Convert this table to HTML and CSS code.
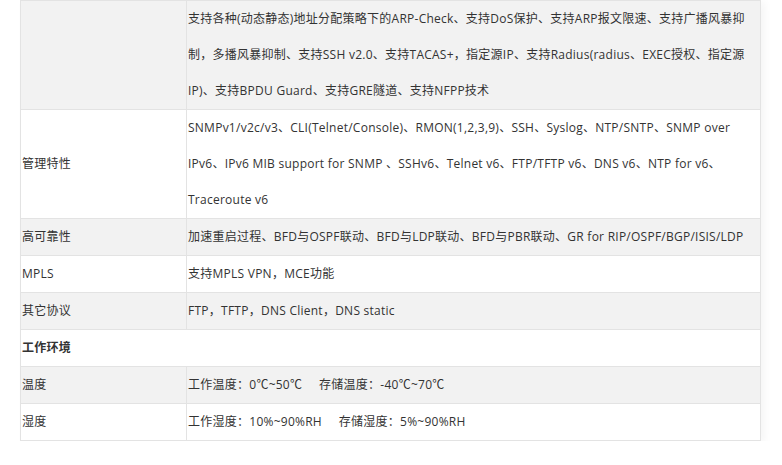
FILE: index.html
```html
<!DOCTYPE html>
<html lang="zh-CN">
<head>
<meta charset="utf-8">
<title>规格参数</title>
<link rel="stylesheet" href="styles.css">
</head>
<body>
<div class="wrap">
<table class="spec">
  <colgroup><col class="c-name"><col class="c-val"></colgroup>
  <tbody>
    <tr class="alt">
      <td></td>
      <td>支持各种(动态静态)地址分配策略下的ARP-Check、支持DoS保护、支持ARP报文限速、支持广播风暴抑<br>制<span class="fp">，</span>多播风暴抑制、支持SSH v2.0、支持TACAS+<span class="fp">，</span>指定源IP、支持Radius(radius、EXEC授权、指定源<br>IP)、支持BPDU Guard、支持GRE隧道、支持NFPP技术</td>
    </tr>
    <tr>
      <td>管理特性</td>
      <td>SNMPv1/v2c/v3、CLI(Telnet/Console)、RMON(1,2,3,9)、SSH、Syslog、NTP/SNTP、SNMP over<br>IPv6、IPv6 MIB support for SNMP 、SSHv6、Telnet v6、FTP/TFTP v6、DNS v6、NTP for v6、<br>Traceroute v6</td>
    </tr>
    <tr class="alt">
      <td>高可靠性</td>
      <td>加速重启过程、BFD与OSPF联动、BFD与LDP联动、BFD与PBR联动、GR for RIP/OSPF/BGP/ISIS/LDP</td>
    </tr>
    <tr>
      <td>MPLS</td>
      <td>支持MPLS VPN<span class="fp">，</span>MCE功能</td>
    </tr>
    <tr class="alt">
      <td>其它协议</td>
      <td>FTP<span class="fp">，</span>TFTP<span class="fp">，</span>DNS Client<span class="fp">，</span>DNS static</td>
    </tr>
    <tr>
      <th colspan="2">工作环境</th>
    </tr>
    <tr class="alt">
      <td>温度</td>
      <td>工作温度<span class="fp">：</span>0℃~50℃&nbsp;&nbsp;&nbsp;&nbsp;&nbsp;存储温度<span class="fp">：</span>-40℃~70℃</td>
    </tr>
    <tr>
      <td>湿度</td>
      <td>工作湿度<span class="fp">：</span>10%~90%RH&nbsp;&nbsp;&nbsp;&nbsp;&nbsp;存储湿度<span class="fp">：</span>5%~90%RH</td>
    </tr>
  </tbody>
</table>
</div>
</body>
</html>
```
FILE: styles.css
```css
html, body {
  margin: 0;
  padding: 0;
  background: #fff;
}
body {
  font-family: "Open Sans", "Noto Sans CJK SC", sans-serif;
  font-size: 12px;
  color: #333;
}
.wrap {
  padding: 0 22px 0 20px;
  width: 741px;
}
.spec {
  width: 741px;
  border-collapse: collapse;
  table-layout: fixed;
  box-shadow: 4px 2px 8px rgba(0, 0, 0, 0.04);
}
.c-name { width: 166px; }
.spec td, .spec th {
  border: 1px solid #e3e3e3;
  padding: 0 2px 0 1px;
  line-height: 36px;
  letter-spacing: 0.25px;
  white-space: nowrap;
  vertical-align: middle;
  text-align: left;
}
.spec th {
  font-weight: bold;
  background: #fff;
}
.spec tr.alt td {
  background: #f2f2f2;
}
.fp {
  font-family: "Noto Sans CJK TC", sans-serif;
  line-height: 1;
}
```
